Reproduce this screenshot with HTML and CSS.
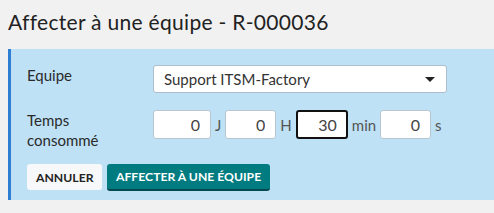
FILE: index.html
```html
<!DOCTYPE html>
<html lang="fr">
<head>
    <meta charset="UTF-8">
    <title>Affecter à une équipe</title>
    <link rel="stylesheet" href="styles.css">
</head>
<body>
    <h1 class="title">Affecter à une équipe - R-000036</h1>
    <div class="panel">
        <div class="row">
            <label class="label">Equipe</label>
            <div class="select">
                <span>Support ITSM-Factory</span>
                <span class="caret"></span>
            </div>
        </div>
        <div class="row">
            <label class="label">Temps<br>consommé</label>
            <div class="time">
                <input class="num num-days" type="text" value="0"><span class="unit">J</span>
                <input class="num" type="text" value="0"><span class="unit">H</span>
                <input class="num focused" type="text" value="30"><span class="unit">min</span>
                <input class="num" type="text" value="0"><span class="unit">s</span>
            </div>
        </div>
        <div class="actions">
            <button class="btn btn-cancel">ANNULER</button>
            <button class="btn btn-primary">AFFECTER À UNE ÉQUIPE</button>
        </div>
    </div>
</body>
</html>
```

FILE: styles.css
```css
body {
    margin: 0;
    background-color: #f1f1f1;
    font-family: Lato, "Open Sans", Arial, sans-serif;
    color: #2a2a2a;
}

.title {
    margin: 0;
    padding: 9px 8px 0;
    height: 49px;
    box-sizing: border-box;
    font-size: 21px;
    letter-spacing: 0.3px;
    font-weight: normal;
    color: #222;
}

.panel {
    margin-left: 8px;
    border-left: 3px solid #2e7fd3;
    background-color: #bee1f6;
    padding: 16px 16px 9px;
}

.row {
    display: flex;
    align-items: flex-start;
    margin-bottom: 17px;
}

.row:nth-child(2) {
    margin-bottom: 14px;
}

.label {
    width: 126px;
    font-size: 15px;
    line-height: 20px;
    color: #2a2a2a;
}

.select {
    width: 294px;
    height: 28px;
    box-sizing: border-box;
    background: #fff;
    border: 1px solid #aebdcb;
    border-radius: 3px;
    display: flex;
    align-items: center;
    justify-content: space-between;
    padding: 0 10px;
    font-size: 15px;
    color: #333;
}

.caret {
    width: 0;
    height: 0;
    border-left: 5px solid transparent;
    border-right: 5px solid transparent;
    border-top: 5px solid #222;
    margin-right: 1px;
}

.time {
    display: flex;
    align-items: center;
}

.num {
    width: 51px;
    height: 29px;
    box-sizing: border-box;
    border: 1px solid #b9c6d2;
    border-radius: 3px;
    background: #fff;
    text-align: right;
    padding: 0 10px;
    font-family: inherit;
    font-size: 16px;
    color: #444;
    outline: none;
}

.num-days {
    width: 58px;
}

.num.focused {
    width: 52px;
    border: 2px solid #111;
    padding-right: 9px;
}

.unit {
    font-size: 15px;
    color: #555;
    margin: 0 4px;
}

.actions {
    display: flex;
    gap: 5px;
}

.btn {
    height: 27px;
    box-sizing: border-box;
    border: none;
    border-radius: 3px;
    font-family: inherit;
    font-size: 12.2px;
    font-weight: bold;
    padding: 0 9px;
}

.btn-cancel {
    background: #f6f8fa;
    color: #222;
    width: 75px;
    height: 26px;
}

.btn-primary {
    background: #007b80;
    color: #fff;
    border-bottom: 2px solid #034a4e;
}
```
